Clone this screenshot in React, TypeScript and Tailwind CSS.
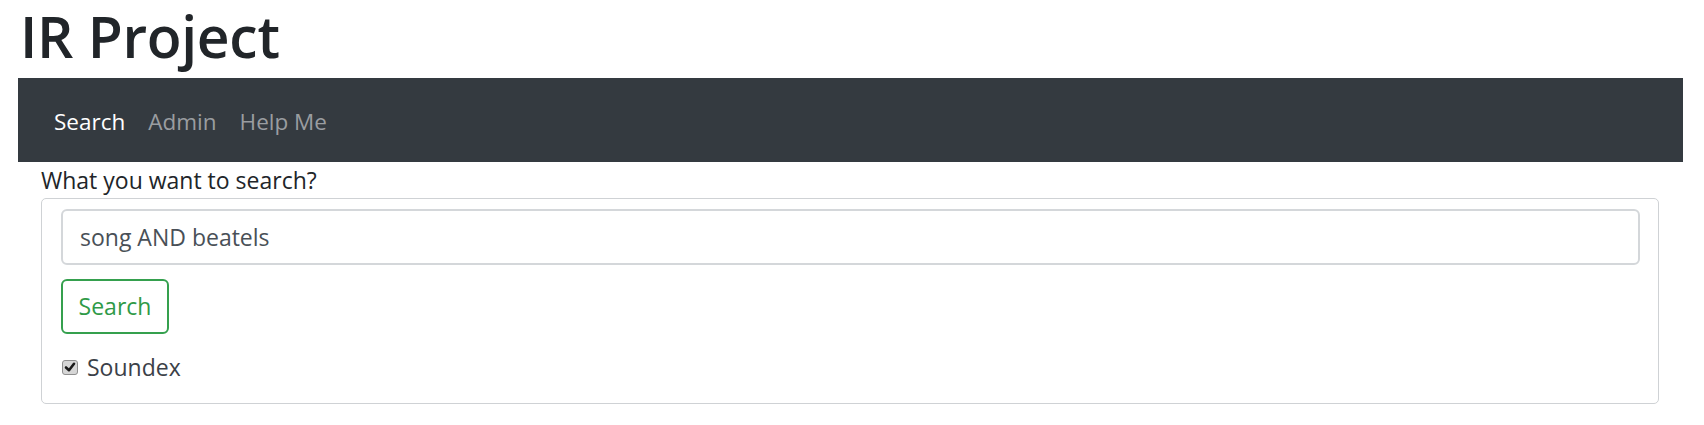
import React from 'react';

const App: React.FC = () => {
  return (
    <div className="min-h-[425px] bg-white font-['Open_Sans',sans-serif] text-[#212529]">
      {/* Title */}
      <h1 className="pl-[20px] mb-[6px] text-[57px] leading-[72px] font-semibold tracking-[-0.3px]">
        IR Project
      </h1>

      {/* Navbar */}
      <nav className="ml-[18px] w-[1665px] h-[84px] bg-[#343a40] flex items-center pl-[36px] pt-[3px] gap-[23px] text-[22.5px]">
        <span className="text-white">Search</span>
        <span className="text-[#9a9da0]">Admin</span>
        <span className="text-[#9a9da0]">Help Me</span>
      </nav>

      {/* Search form */}
      <div className="ml-[41px] w-[1618px]">
        <label className="block text-[23px] leading-[36px]">What you want to search?</label>
        <div className="border border-[#cfd2d5] rounded-[5px] pl-[19px] pr-[18px] pt-[10px] pb-[18px]">
          <div className="h-[56px] border-2 border-[#d4d7da] rounded-[6px] flex items-center pl-[17px] text-[23px] text-[#495057]">
            song AND beatels
          </div>
          <button className="mt-[14px] h-[55px] w-[108px] border-2 border-[#35a04e] rounded-[6px] text-[23px] text-[#2f9a47] flex items-center justify-center">
            Search
          </button>
          <div className="mt-[15px] h-[36px] flex items-center text-[23px] text-[#3b4148]">
            <span className="ml-[1px] w-[16px] h-[15px] rounded-[3px] border border-[#8f8f8f] bg-[#d6d6d6] flex items-center justify-center">
              <svg width="12" height="12" viewBox="0 0 12 12">
                <path d="M2 6.5 L5 9.2 L10 2.8" fill="none" stroke="#1a1a1a" strokeWidth="2.6" strokeLinecap="round" strokeLinejoin="round" />
              </svg>
            </span>
            <span className="ml-[9px]">Soundex</span>
          </div>
        </div>
      </div>
    </div>
  );
};

export default App;
